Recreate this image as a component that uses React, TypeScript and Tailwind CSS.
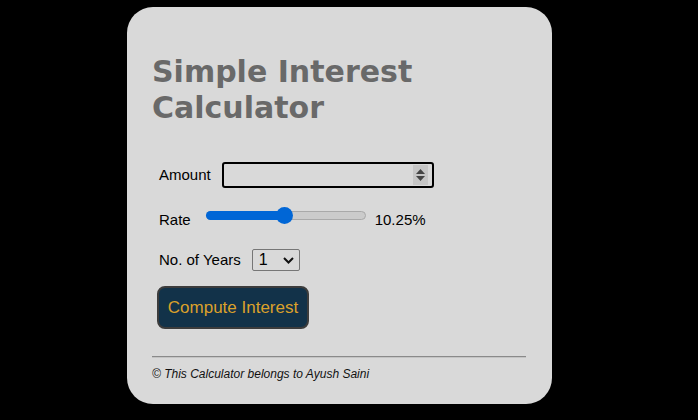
import { useState } from 'react';

export default function App() {
  const [amount, setAmount] = useState('');
  const [rate] = useState(10.25);
  const [years, setYears] = useState('1');

  // slider position, 1..20
  const pct = ((rate - 1) / 19) * 100;

  return (
    <div className="min-h-[420px] w-full bg-black pt-[7px] pl-[127px] [font-family:'Liberation_Sans',Arial,sans-serif]">
      <div className="w-[425px] h-[397px] rounded-[26px] bg-[#d9d9d9] px-[25px] pt-[47px]">
        <h1 className="text-[30px] leading-[36px] font-bold text-[#696969] [font-family:'DejaVu_Sans',Verdana,sans-serif]">
          Simple Interest
          <br />
          Calculator
        </h1>

        <div className="pl-[7px] pt-[36px] text-[15px] text-black">
          {/* amount */}
          <div className="flex items-center h-[26px]">
            <label className="mr-[11px]">Amount</label>
            <div className="flex items-center w-[212px] h-[26px] border-2 border-black rounded-[3px] pr-[4px]">
              <input
                type="text"
                value={amount}
                onChange={(e) => setAmount(e.target.value)}
                className="flex-1 min-w-0 h-full bg-transparent outline-none px-1"
              />
              <div className="flex flex-col items-center justify-center gap-[2px] w-[15px] h-[20px] bg-[#c6c6c6]">
                <svg width="9" height="5" viewBox="0 0 9 5">
                  <path d="M0 5 L4.5 0 L9 5 Z" fill="#444" />
                </svg>
                <svg width="9" height="5" viewBox="0 0 9 5">
                  <path d="M0 0 L4.5 5 L9 0 Z" fill="#444" />
                </svg>
              </div>
            </div>
          </div>

          {/* rate */}
          <div className="flex items-center h-[26px] mt-[16px]">
            <label className="mr-[15px] relative top-[3px]">Rate</label>
            <div className="relative w-[160px] h-[18px] mb-[4px]">
              <div className="absolute left-0 right-0 top-[5px] h-[9px] rounded-full bg-[#cbcbcb] border border-[#a9a9a9]" />
              <div
                className="absolute left-0 top-[5px] h-[9px] rounded-full bg-[#0066d6]"
                style={{ width: `calc(${pct}% )` }}
              />
              <div
                className="absolute top-[1px] w-[17px] h-[17px] -ml-[8px] rounded-full bg-[#0066d6]"
                style={{ left: `calc(8px + ${pct / 100} * 144px)` }}
              />
            </div>
            <span className="ml-[9px] relative top-[3px]">{rate.toFixed(2)}%</span>
          </div>

          {/* years */}
          <div className="flex items-center h-[24px] mt-[18px]">
            <label className="mr-[11px]">No. of Years</label>
            <div className="flex items-center justify-between w-[48px] h-[22px] border border-[#767676] rounded-[2px] pl-[6px] pr-[5px]">
              <span className="text-[16px]">{years}</span>
              <svg width="11" height="7" viewBox="0 0 11 7">
                <path d="M1 1 L5.5 5.5 L10 1" stroke="#111" strokeWidth="2" fill="none" />
              </svg>
            </div>
          </div>

          <button
            onClick={() => setYears(years)}
            className="mt-[14px] -ml-[2px] w-[152px] h-[43px] rounded-[8px] border-2 border-[#3c3c3c] bg-[#123249] text-[17px] text-[#dca12b]"
          >
            Compute Interest
          </button>
        </div>

        <div className="mt-[27px] w-[374px] h-[2px] border-t border-t-[#8a8a8a] border-b border-b-[#c4c4c4]" />
        <p className="mt-[7px] text-[12px] italic text-[#111]">© This Calculator belongs to Ayush Saini</p>
      </div>
    </div>
  );
}
